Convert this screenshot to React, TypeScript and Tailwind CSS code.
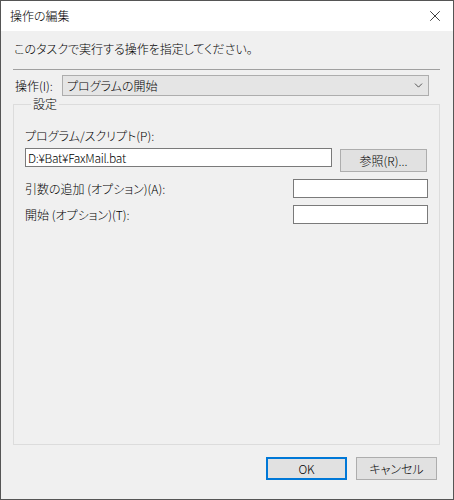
import { X, ChevronDown } from "lucide-react";

const font = "font-['Noto_Sans_CJK_JP','Noto_Sans',sans-serif] font-light [font-feature-settings:'palt'] text-[12px] leading-[16px] text-black";

function TextBox({ value, className }: { value?: string; className: string }) {
  return (
    <div className={`h-[19px] bg-white border border-[#7a7a7a] flex items-center px-[2px] tracking-[-0.3px] ${className}`}>
      {value}
    </div>
  );
}

function Button({ label, primary, className }: { label: string; primary?: boolean; className: string }) {
  return (
    <div
      className={`h-[23px] flex items-center justify-center bg-[#e1e1e1] ${
        primary ? "border-2 border-[#0078d7]" : "border border-[#adadad]"
      } ${className}`}
    >
      {label}
    </div>
  );
}

export default function App() {
  return (
    <div className={`w-[454px] h-[500px] flex flex-col border border-[#555] ${font}`}>
      <div className="h-[30px] bg-white flex items-center justify-between pl-[9px] pr-[9px]">
        <span>操作の編集</span>
        <X size={18} strokeWidth={1} className="text-black" />
      </div>
      <div className="flex-1 bg-[#f0f0f0] flex flex-col px-[12px]">
        <p className="mt-[10px] pl-[1px]">このタスクで実行する操作を指定してください。</p>
        <div className="mt-[12px] h-[1px] bg-[#a0a0a0] mr-[1px]" />
        <div className="mt-[5px] flex items-center pr-[12px]">
          <span className="w-[49px] pl-[2px]">操作(I):</span>
          <div className="flex-1 h-[21px] bg-[#e5e5e5] border border-[#adadad] flex items-center justify-between pl-[4px] pr-[3px]">
            <span>プログラムの開始</span>
            <ChevronDown size={13} strokeWidth={1.5} className="text-[#333]" />
          </div>
        </div>
        <fieldset className="h-[349px] border border-[#dcdcdc] mr-[1px] px-[11px]">
          <legend className="ml-[6px] px-[2px]">設定</legend>
          <p className="mt-[16px]">プログラム/スクリプト(P):</p>
          <div className="mt-[4px] flex items-start gap-[8px]">
            <TextBox value="D:¥Bat¥FaxMail.bat" className="w-[307px]" />
            <Button label="参照(R)..." className="w-[87px] mt-[1px]" />
          </div>
          <div className="mt-[7px] flex items-center justify-between">
            <span>引数の追加 (オプション)(A):</span>
            <TextBox className="w-[135px]" />
          </div>
          <div className="mt-[7px] flex items-center justify-between">
            <span>開始 (オプション)(T):</span>
            <TextBox className="w-[135px]" />
          </div>
        </fieldset>
        <div className="mt-[12px] flex justify-end gap-[9px] pr-[4px]">
          <Button label="OK" primary className="w-[81px]" />
          <Button label="キャンセル" className="w-[81px]" />
        </div>
      </div>
    </div>
  );
}
